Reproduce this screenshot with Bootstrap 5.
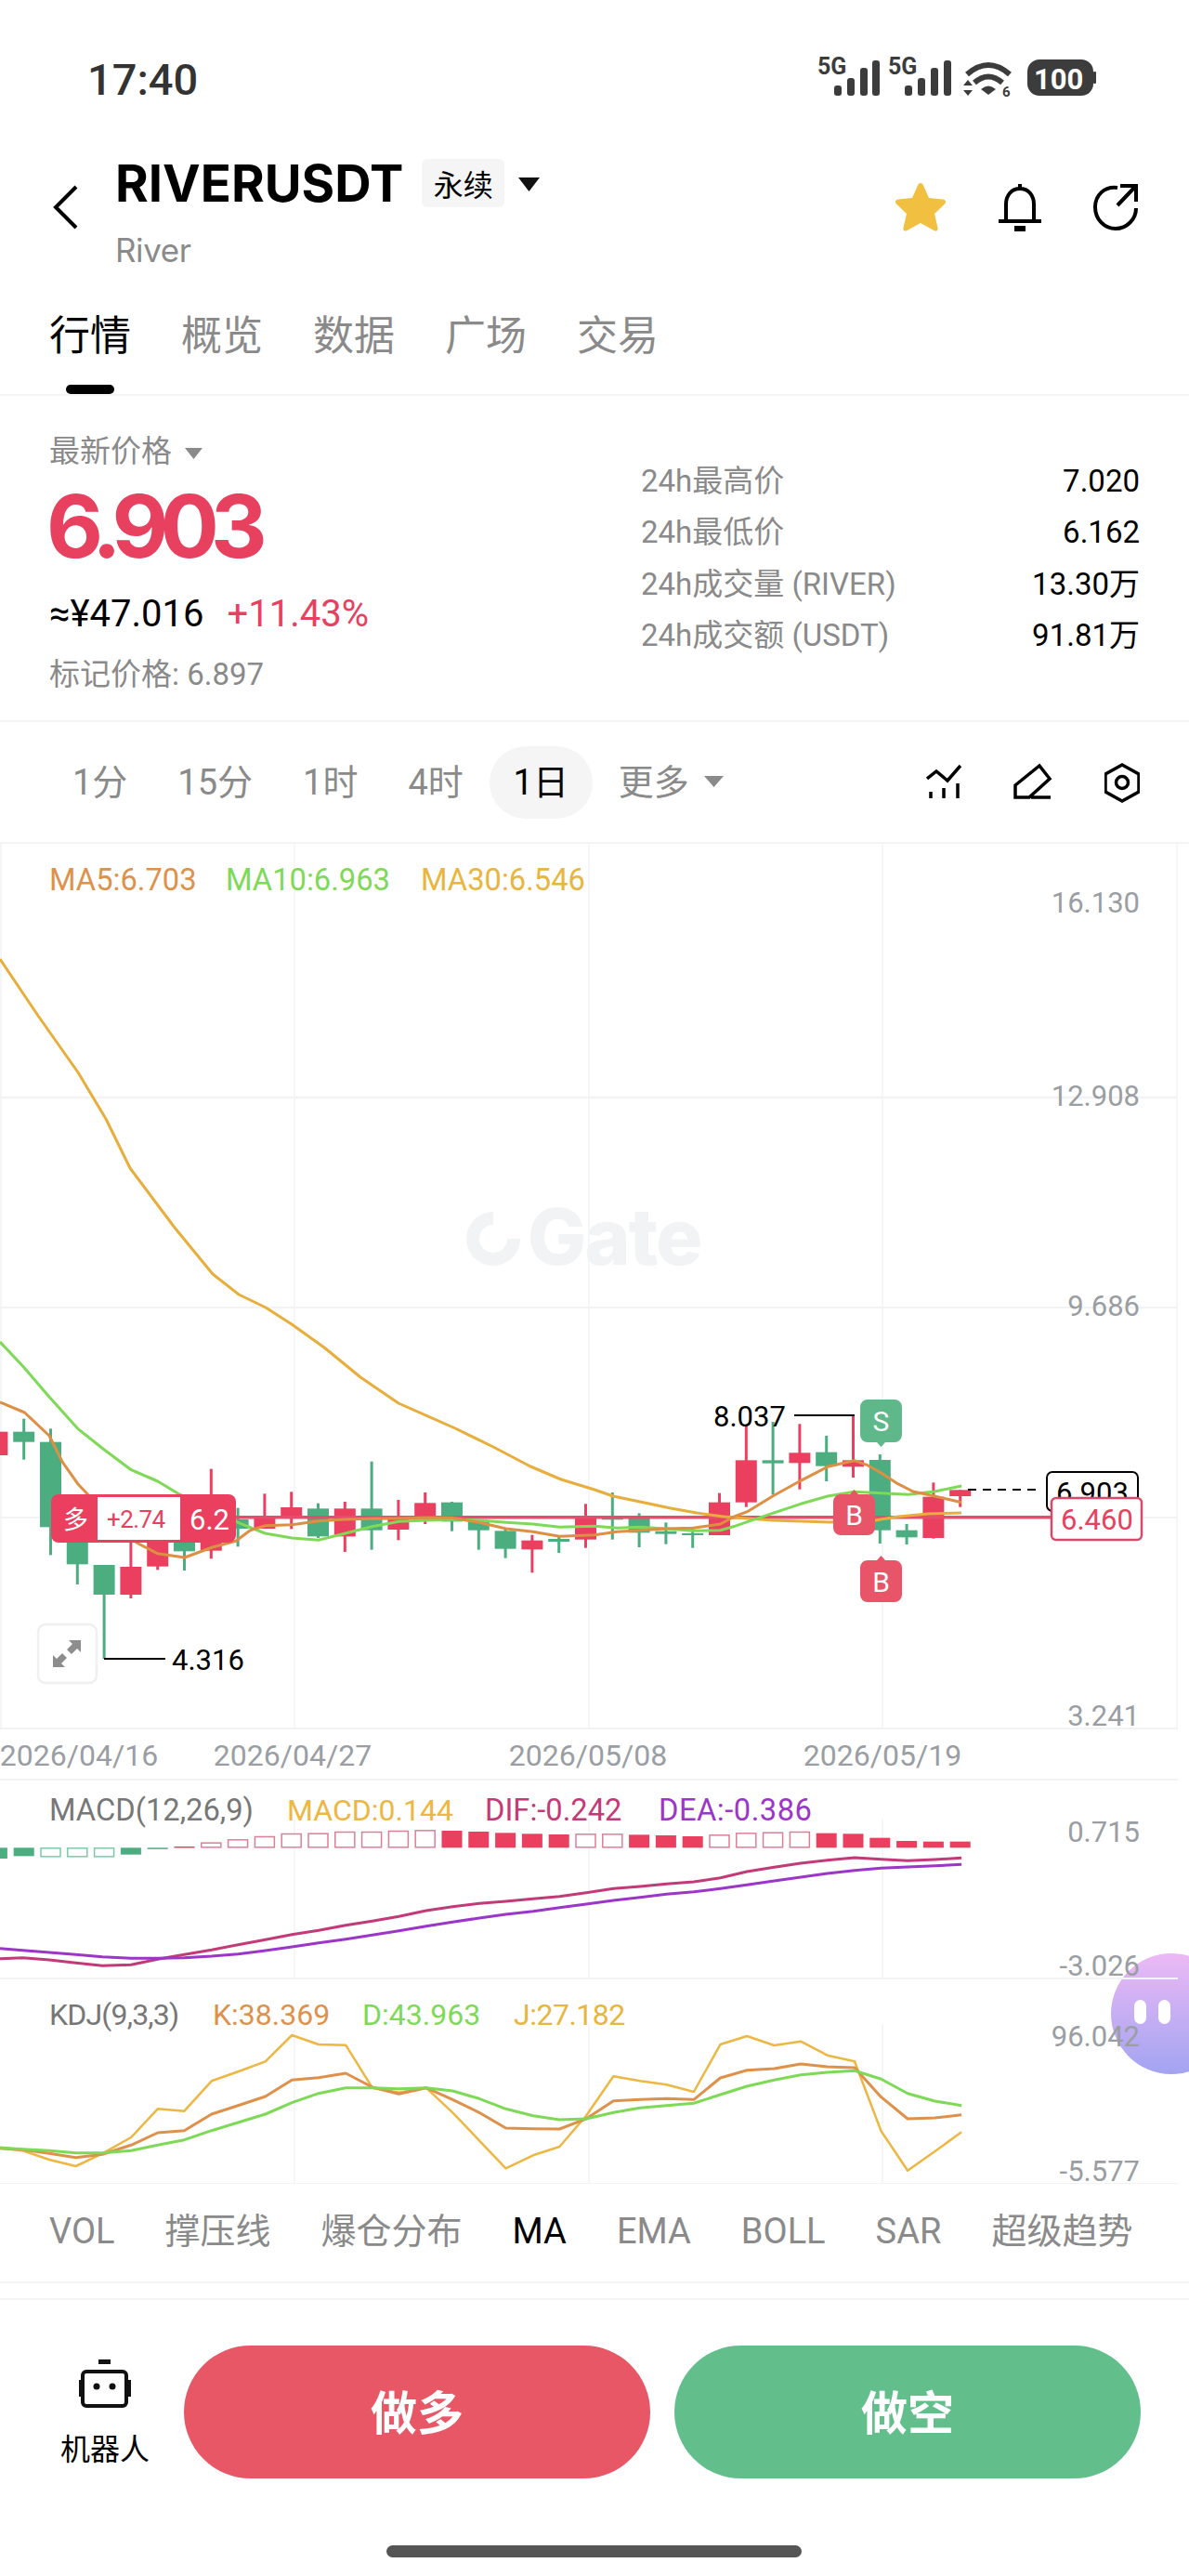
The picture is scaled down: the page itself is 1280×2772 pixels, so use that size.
<!DOCTYPE html>
<html lang="zh">
<head>
<meta charset="utf-8">
<title>RIVERUSDT</title>
<link href="https://cdn.jsdelivr.net/npm/bootstrap@5.3.0/dist/css/bootstrap.min.css" rel="stylesheet">
<style>
html,body{margin:0;background:#fff}
body{width:1280px;height:2772px;overflow:hidden;font-family:Roboto,"Noto Sans CJK SC",sans-serif;color:#000}
.app{width:1280px;height:2772px;position:relative}
.cjk{font-family:"Noto Sans CJK SC",sans-serif}
.gr{color:#8a8a8a}
.rd{color:#e8405f}
.sbar{height:160px;padding:62px 94px 0}
.clock{font-size:47px;font-weight:500;color:#333;line-height:1}
.sicons{position:absolute;left:870px;top:50px;width:320px;height:62px}
.hdr{height:160px;padding-left:57px;padding-right:54px}
.back{width:27px;height:48px;margin-top:39px;margin-right:40px;flex:none}
.sym{font-family:Inter,sans-serif;font-weight:700;font-size:54.500px;line-height:1;margin-top:10px}
.pname{font-family:Inter,sans-serif;font-size:35px;line-height:1;margin-top:27px;color:#8a8a8a;letter-spacing:-.4px}
.perp{width:89px;height:52px;background:#f5f5f5;border-radius:6px;font-size:32px;margin-left:20px;margin-top:11px}
.caret{width:23px;height:15px;margin-left:15px;margin-top:31px}
.hicons{margin-left:auto;margin-top:35px;gap:53px}
.tabs{height:106px;padding-left:53px;gap:54px;font-size:44px;border-bottom:2px solid #f4f4f4;position:relative;line-height:76px}
.tabs span{width:88px;text-align:center}
.tabbar{position:absolute;left:71px;bottom:0;width:52px;height:10px;background:#000;border-radius:5px}
.pricebox{height:351px;padding:0 53px;border-bottom:2px solid #f4f4f4}
.lab{font-size:33px;line-height:1;padding-top:43px}
.lab svg{width:19px;height:12px;margin-left:14px;vertical-align:3px}
.bigp{font-family:Inter,sans-serif;font-weight:700;font-size:94px;line-height:1;letter-spacing:-9px;margin-top:17px;margin-left:-3px;color:#e8405f}
.subp{font-size:40px;line-height:1;margin-top:28px;gap:25px}
.markp{font-size:33px;line-height:1;margin-top:28px}
.stats{width:537px;padding-top:75px;font-size:33px;line-height:1}
.stats>div{height:55.3px}
.tf{height:131px;padding:26px 53px 0 78px;border-bottom:2px solid #f4f4f4;font-size:38px;line-height:78px}
.tf>span{display:block}
.pill{width:111px;height:78px;border-radius:39px;background:#f5f5f5;text-align:center;color:#000;margin-left:28px}
.tfgap{gap:54px}
.more{margin-left:28px}
.tcaret{margin-left:16px;margin-top:32px}
.tficons{margin-left:auto;gap:56px}
.chartwrap{height:1442px;position:relative}
.chartwrap svg.ch{display:block;position:absolute;left:0;top:0}
.ch text{font-family:Roboto,"Noto Sans CJK SC",sans-serif}
.ax{font-size:31px;fill:#9a9ea3;text-anchor:end}
.leg{font-size:32.700px}
.leg2{font-size:32px}
.dt{font-size:32px;fill:#9a9ea3;text-anchor:middle}
.bk{font-size:31px;fill:#000}
.bub{position:absolute;left:1196px;top:1194px;width:130px;height:130px;border-radius:50%;background:linear-gradient(#ecb9f5,#a2a4f1)}
.eye{position:absolute;top:50px;width:13px;height:26px;border-radius:7px;background:#fff}
.inds{height:105px;padding-left:53px;gap:54px;font-size:38px;line-height:102px;color:#8a8a8a;white-space:nowrap}
.sep{height:2px;background:#f4f4f4}
.gapz{height:16px}
.act{padding:49px 53px 0 65px;gap:26px}
.bot{width:96px;margin-right:11px;font-size:32px;line-height:1;text-align:center;flex:none;white-space:nowrap}
.bot svg{display:block;margin:15px auto 26px}
.bbtn{width:502px;height:143px;border-radius:72px;color:#fff;font-size:50px;font-weight:700;line-height:138px;text-align:center;flex:none}
.bred{background:#e85766}
.bgrn{background:#62bf8c}
.home{position:absolute;left:416px;top:2739px;width:447px;height:13px;border-radius:7px;background:#555}
</style>
</head>
<body>
<div class="app">

<div class="sbar">
  <div class="clock">17:40</div>
  <svg class="sicons" viewBox="870 50 320 62">
    <g fill="#3c3c3c" font-family="Roboto,sans-serif" font-weight="700" font-size="25">
      <text x="880" y="80">5G</text><text x="956" y="80">5G</text>
      <rect x="898" y="92" width="8" height="11" rx="3"/><rect x="912" y="84" width="8" height="19" rx="3"/><rect x="926" y="73" width="8" height="30" rx="3"/><rect x="939" y="65" width="8" height="38" rx="3"/>
      <rect x="974" y="92" width="8" height="11" rx="3"/><rect x="988" y="84" width="8" height="19" rx="3"/><rect x="1002" y="73" width="8" height="30" rx="3"/><rect x="1016" y="65" width="8" height="38" rx="3"/>
      <path d="M1041 80q23-20 46 0" fill="none" stroke="#3c3c3c" stroke-width="6"/>
      <path d="M1049 89q15-13 30 0" fill="none" stroke="#3c3c3c" stroke-width="6"/>
      <path d="M1056 96q8-7 16 0l-8 6z"/>
      <path d="M1037 92l5-6 5 6zM1037 97l5 6 5-6z"/>
      <text x="1079" y="104" font-size="15">6</text>
      <rect x="1106" y="64" width="71" height="39" rx="13"/><rect x="1177" y="77" width="3" height="13" rx="1"/>
      <text x="1113" y="96" font-size="31" fill="#fff">100</text>
    </g>
  </svg>
</div>

<div class="hdr d-flex">
  <svg class="back" viewBox="0 0 27 48"><path d="M25 2 3 24l22 22" fill="none" stroke="#000" stroke-width="4"/></svg>
  <div>
    <div class="sym">RIVERUSDT</div>
    <div class="pname">River</div>
  </div>
  <div class="perp cjk d-flex align-items-center justify-content-center">永续</div>
  <svg class="caret" viewBox="0 0 23 15"><path d="M0 0h23L11.500 15z" fill="#111"/></svg>
  <div class="hicons d-flex">
    <svg width="58" height="54" viewBox="0 0 58 54"><path d="M29 2c1.500 0 2.500 1 3 2.500l6 13.500 15 1.500c3 .3 4 3 2 5L44 35l3.500 15c.6 3-1.700 4.500-4 3L29 45l-14.500 8c-2.300 1.500-4.600 0-4-3L14 35 3 24.500c-2-2-1-4.700 2-5L20 18l6-13.500c.5-1.500 1.500-2.500 3-2.500z" fill="#f2c040"/></svg>
    <svg width="50" height="54" viewBox="0 0 50 54"><path d="M25 3v6M10 42V25C10 15 16 8 25 8s15 7 15 17v17M2 43h46" fill="none" stroke="#000" stroke-width="4"/><rect x="19" y="48" width="12" height="6" fill="#000"/></svg>
    <svg width="50" height="54" viewBox="0 0 50 54"><path d="M27 7C13 5 3 15 3 28s10 23 22 23 22-10 22-22M45 7 27 26M30 5h17v17" fill="none" stroke="#000" stroke-width="4"/></svg>
  </div>
</div>

<div class="tabs d-flex cjk">
  <span>行情</span><span class="gr">概览</span><span class="gr">数据</span><span class="gr">广场</span><span class="gr">交易</span>
  <i class="tabbar"></i>
</div>

<div class="pricebox d-flex justify-content-between">
  <div>
    <div class="lab gr">最新价格<svg viewBox="0 0 19 12"><path d="M0 0h19L9.500 12z" fill="#8a8a8a"/></svg></div>
    <div class="bigp">6.903</div>
    <div class="subp d-flex"><span>≈¥47.016</span><span class="rd">+11.43%</span></div>
    <div class="markp gr">标记价格: 6.897</div>
  </div>
  <div class="stats">
    <div class="d-flex justify-content-between"><span class="gr">24h最高价</span><span>7.020</span></div>
    <div class="d-flex justify-content-between"><span class="gr">24h最低价</span><span>6.162</span></div>
    <div class="d-flex justify-content-between"><span class="gr">24h成交量 (RIVER)</span><span>13.30万</span></div>
    <div class="d-flex justify-content-between"><span class="gr">24h成交额 (USDT)</span><span>91.81万</span></div>
  </div>
</div>

<div class="tf d-flex gr">
  <div class="d-flex tfgap"><span>1分</span><span>15分</span><span>1时</span><span>4时</span></div>
  <span class="pill">1日</span>
  <span class="more">更多</span>
  <svg class="tcaret" width="21" height="12" viewBox="0 0 21 12"><path d="M0 0h21L10.500 12z" fill="#8a8a8a"/></svg>
  <div class="tficons d-flex align-items-start">
    <svg width="38" height="78" viewBox="1001 803 38 78"><path d="M1002 838l10-8 12 10 14-16M1006 859v-7M1020 859v-11M1035 859v-16" fill="none" stroke="#000" stroke-width="3.500"/></svg>
    <svg width="42" height="78" viewBox="1094 803 42 78"><path d="M1122 824l11 14-22 20h-15v-13zM1113 858h21" fill="none" stroke="#000" stroke-width="3.500"/></svg>
    <svg width="38" height="78" viewBox="1189 803 38 78"><path d="M1208 823l18 10v19l-18 10-18-10v-19z" fill="none" stroke="#000" stroke-width="3.500"/><circle cx="1208" cy="842" r="6.500" fill="none" stroke="#000" stroke-width="3.500"/></svg>
  </div>
</div>

<div class="chartwrap">
  <div class="bub"><i class="eye" style="left:25px"></i><i class="eye" style="left:51px"></i></div>
  <svg class="ch" id="ch" width="1280" height="1442" viewBox="0 908 1280 1442">
    <g id="grid"></g>
    <g fill="#f1f3f4">
      <path d="M531 1304a29 29 0 1 0 29 29h-14a15 15 0 1 1-15-15z"/>
      <text x="568" y="1361" font-size="84" font-weight="800" style="font-family:Inter,sans-serif" letter-spacing="-2">Gate</text>
    </g>
    <g id="cand"></g>
    <rect x="254" y="1631" width="880" height="3.500" fill="#e54d6c"/>
    <g id="lines" fill="none" stroke-linejoin="round"></g>

    <text class="leg" x="53" y="958" fill="#dd914a">MA5:6.703</text>
    <text class="leg" x="243" y="958" fill="#7ed957">MA10:6.963</text>
    <text class="leg" x="453" y="958" fill="#e8b53e">MA30:6.546</text>
    <text class="ax" x="1227" y="982">16.130</text>
    <text class="ax" x="1227" y="1190">12.908</text>
    <text class="ax" x="1227" y="1416">9.686</text>
    <text class="ax" x="1227" y="1857">3.241</text>
    <text class="dt" x="85" y="1900">2026/04/16</text>
    <text class="dt" x="315" y="1900">2026/04/27</text>
    <text class="dt" x="633" y="1900">2026/05/08</text>
    <text class="dt" x="950" y="1900">2026/05/19</text>

    <path d="M112 1785h66" stroke="#000" stroke-width="2" fill="none"/>
    <text class="bk" x="185" y="1797">4.316</text>
    <path d="M855 1523h65" stroke="#000" stroke-width="2" fill="none"/>
    <text class="bk" x="768" y="1535">8.037</text>

    <rect x="41" y="1748" width="63" height="63" rx="8" fill="#fff" stroke="#f0f0f0" stroke-width="2.500"/>
    <path d="M87 1765l-13 0 4 4-6 6 5 5 6-6 4 4zM57 1794l13 0-4-4 6-6-5-5-6 6-4-4z" fill="#8d8d8d"/>

    <path d="M1042 1603h80" stroke="#000" stroke-width="2" stroke-dasharray="9 7"/>
    <rect x="1127" y="1584" width="98" height="42" rx="6" fill="#fff" stroke="#000" stroke-width="2"/>
    <text class="bk" x="1137" y="1617">6.903</text>
    <rect x="1132" y="1612" width="97" height="45" rx="5" fill="#fff" stroke="#d9486a" stroke-width="2.500"/>
    <text x="1142" y="1646" font-size="31" fill="#e8405f">6.460</text>

    <path d="M926 1514a8 8 0 0 1 8-8h29a8 8 0 0 1 8 8v30a8 8 0 0 1-8 8h-10l-4.500 5-4.500-5h-10a8 8 0 0 1-8-8z" fill="#5eb88a"/>
    <text x="948.500" y="1540" font-size="30" fill="#fff" text-anchor="middle">S</text>
    <path d="M897 1616a8 8 0 0 1 8-8h10l4.500-5 4.500 5h10a8 8 0 0 1 8 8v28a8 8 0 0 1-8 8h-29a8 8 0 0 1-8-8z" fill="#e85468"/>
    <text x="919.500" y="1641" font-size="30" fill="#fff" text-anchor="middle">B</text>
    <path d="M926 1687a8 8 0 0 1 8-8h10l4.500-5 4.500 5h10a8 8 0 0 1 8 8v29a8 8 0 0 1-8 8h-29a8 8 0 0 1-8-8z" fill="#e85468"/>
    <text x="948.500" y="1713" font-size="30" fill="#fff" text-anchor="middle">B</text>

    <rect x="55" y="1608" width="199" height="52" rx="8" fill="#ea3f5e"/>
    <rect x="105" y="1611" width="89" height="46" fill="#fff"/>
    <text x="68" y="1645" font-size="27" fill="#fff">多</text>
    <text x="115" y="1644" font-size="26" fill="#e8405f" letter-spacing="-.6">+2.74</text>
    <text x="204" y="1646" font-size="31" fill="#fff">6.2</text>

    <text class="leg" x="53" y="1959" fill="#777">MACD(12,26,9)</text>
    <text class="leg2" x="309" y="1959" fill="#ecb742">MACD:0.144</text>
    <text class="leg" x="522" y="1959" fill="#c43a76">DIF:-0.242</text>
    <text class="leg" x="709" y="1959" fill="#9b36c8" letter-spacing=".5">DEA:-0.386</text>
    <text class="ax" x="1227" y="1982">0.715</text>
    <text class="ax" x="1227" y="2126">-3.026</text>

    <text class="leg2" x="53" y="2179" fill="#777" letter-spacing="-.8">KDJ(9,3,3)</text>
    <text class="leg2" x="229" y="2179" fill="#dd914a">K:38.369</text>
    <text class="leg2" x="390" y="2179" fill="#7ed957">D:43.963</text>
    <text class="leg2" x="553" y="2179" fill="#e8b53e" letter-spacing="-.5">J:27.182</text>
    <text class="ax" x="1227" y="2202">96.042</text>
    <text class="ax" x="1227" y="2347">-5.577</text>
  </svg>
</div>

<div class="inds d-flex">
  <span>VOL</span><span>撑压线</span><span>爆仓分布</span><span class="text-black">MA</span><span>EMA</span><span>BOLL</span><span>SAR</span><span>超级趋势</span>
</div>
<div class="sep"></div>
<div class="gapz"></div>
<div class="sep"></div>

<div class="act d-flex">
  <div class="bot">
    <svg width="56" height="52" viewBox="0 0 56 52"><rect x="21" y="0" width="13" height="5" fill="#111"/><rect x="4" y="13" width="47" height="37" rx="4" fill="none" stroke="#111" stroke-width="4"/><rect x="0" y="22" width="4" height="18" fill="#111"/><rect x="52" y="22" width="4" height="18" fill="#111"/><circle cx="19" cy="29" r="3.500" fill="#111"/><circle cx="36" cy="29" r="3.500" fill="#111"/></svg>
    <div class="cjk">机器人</div>
  </div>
  <div class="bbtn bred cjk">做多</div>
  <div class="bbtn bgrn cjk">做空</div>
</div>

<div class="home"></div>
</div>

<script src="https://cdn.jsdelivr.net/npm/bootstrap@5.3.0/dist/js/bootstrap.bundle.min.js"></script>
<script>
(function(){
var NS='http://www.w3.org/2000/svg';
function el(parent,name,attrs){var e=document.createElementNS(NS,name);for(var k in attrs)e.setAttribute(k,attrs[k]);parent.appendChild(e);return e;}
var grid=document.getElementById('grid'),cand=document.getElementById('cand'),lines=document.getElementById('lines');
var GC='#f2f3f4';
[1181,1407,1633,1860,1915,2129,2350].forEach(function(y){el(grid,'line',{x1:0,x2:1268,y1:y,y2:y,stroke:GC,'stroke-width':y==1181?2.5:2});});
[1,317,634,950,1267].forEach(function(x){el(grid,'line',{x1:x,x2:x,y1:908,y2:1860,stroke:GC,'stroke-width':1.5});});
[317,634,950].forEach(function(x){
  el(grid,'line',{x1:x,x2:x,y1:1958,y2:2129,stroke:GC,'stroke-width':1.5});
  el(grid,'line',{x1:x,x2:x,y1:2178,y2:2350,stroke:GC,'stroke-width':1.5});
});
var R='#ea3f5e',G='#4cae80';
function cx(i){return 25.7+28.8*i;}
function zy(v){return 1450+v/3;}
var C=[[-1,R,272,348,272,348],[0,G,272,305,230,362],[1,G,305,580,262,670],[2,G,580,700,480,765],[3,G,702,798,702,1005],[4,R,708,798,630,810],[5,R,600,707,600,718],[6,G,560,658,560,720],[7,R,520,656,392,682],[8,G,555,585,518,643],[9,R,548,585,472,585],[10,R,516,550,466,586],[11,G,520,610,503,615],[12,R,520,610,498,660],[13,G,520,590,368,653],[14,R,548,588,492,622],[15,R,502,550,468,570],[16,G,500,562,498,593],[17,G,562,590,555,653],[18,G,592,650,583,680],[19,R,623,652,605,727],[20,G,618,627,608,663],[21,R,545,620,505,647],[22,G,550,556,468,620],[23,G,552,598,535,645],[24,G,593,602,565,635],[25,G,600,606,585,647],[26,R,500,606,470,606],[27,R,364,500,250,515],[28,G,364,374,240,475],[29,R,340,373,247,458],[30,G,338,383,285,432],[31,R,364,385,220,420],[32,G,363,590,345,633],[33,G,590,613,570,636],[34,R,482,615,436,617],[35,R,460,480,460,515]];
C.forEach(function(c){var x=cx(c[0]);
  el(cand,'rect',{x:x-1.5,y:zy(c[4]),width:3,height:(c[5]-c[4])/3,fill:c[1]});
  el(cand,'rect',{x:x-11.5,y:zy(c[2]),width:23,height:(c[3]-c[2])/3,fill:c[1]});
});
var B=[[-1,'g',1,300],[0,'g',1,292],[1,'g',0,295],[2,'g',0,295],[3,'g',0,295],[4,'g',1,287],[5,'g',1,268],[6,'r',1,261],[7,'r',0,248],[8,'r',0,238],[9,'r',0,228],[10,'r',0,219],[11,'r',0,218],[12,'r',0,213],[13,'r',0,213],[14,'r',0,210],[15,'r',0,208],[16,'r',1,210],[17,'r',1,213],[18,'r',1,217],[19,'r',1,220],[20,'r',1,222],[21,'r',0,220],[22,'r',0,220],[23,'r',1,223],[24,'r',1,225],[25,'r',1,228],[26,'r',0,223],[27,'r',0,217],[28,'r',0,215],[29,'r',0,213],[30,'r',1,218],[31,'r',1,220],[32,'r',1,233],[33,'r',1,243],[34,'r',1,245],[35,'r',1,245]];
B.forEach(function(b){var x=cx(b[0]),col=b[1]=='g'?G:R,y0=1900+265/3,y1=1900+b[3]/3,t=Math.min(y0,y1),h=Math.max(Math.abs(y1-y0),1.5);
  if(b[2])el(cand,'rect',{x:x-11,y:t,width:22,height:h,fill:col});
  else el(cand,'rect',{x:x-10.5,y:t+.5,width:21,height:h-1,fill:'#fff',stroke:b[1]=='g'?'#7ccaa5':'#dc7f95','stroke-width':1.5});
});
function z3(a){return a.map(function(p){return (p[0]/2.45).toFixed(1)+','+(1450+p[1]/3).toFixed(1);});}
function z4(a){return a.map(function(p){return (640+p[0]/2.45).toFixed(1)+','+(1450+p[1]/3).toFixed(1);});}
function z5(a){return a.map(function(p){return (p[0]/1.225).toFixed(1)+','+(1900+p[1]/3).toFixed(1);});}
function line(pts,col,w){el(lines,'polyline',{points:pts.join(' '),stroke:col,'stroke-width':w});}
var ma30=['0,1032','41,1093','84,1154','114,1204','140,1257','188,1321','229,1371','257,1393','286,1407','314,1425','349,1450','388,1482','429,1510','490,1537','531,1557','571,1578','604,1592','640,1603','660,1610','689,1616','722,1623','750,1628','779,1632','791,1633','832,1636','893,1638','942,1636','967,1632','999,1629','1035,1628'];
line(ma30,'#e8ae3c',3);
var ma10=z3([[0,-18],[60,60],[130,160],[205,262],[275,330],[346,395],[416,432],[470,472],[628,565],[699,600],[770,615],[840,622],[911,600],[981,578],[1052,562],[1123,558],[1193,555],[1264,558],[1335,565],[1405,570],[1476,580]]).concat(z4([[0,577],[60,583],[120,580],[190,585],[260,592],[332,590],[370,577],[403,563],[470,535],[544,505],[615,480],[685,466],[756,470],[827,475],[897,465],[968,447]]));
line(ma10,'#7ed957',3);
var ma5=z3([[0,177],[65,210],[130,285],[165,370],[205,440],[232,475],[360,630],[415,665],[487,678],[560,645],[622,625],[660,590],[700,575],[770,572],[840,560],[910,555],[980,553],[1050,552],[1120,550],[1190,550],[1264,565],[1335,585],[1405,595],[1476,610]]).concat(z4([[0,605],[60,595],[120,590],[190,585],[260,583],[332,570],[370,545],[403,530],[470,480],[544,430],[615,385],[685,365],[720,380],[756,405],[800,440],[840,465],[897,480],[968,500]]));
line(ma5,'#dd8f43',3);
var X=[0,30,65,100,135,173,208,243,279,314,350,385,420,456,491,526,562,597,632,667,703,738,773,809,844,879,915,950,985,1021,1056,1091,1127,1162,1197,1233,1268];
function zip(ys){return z5(ys.map(function(y,i){return [X[i],y];}));}
line(zip([623,620,627,637,646,643,625,610,595,578,562,545,532,515,502,487,468,455,445,438,430,422,410,397,390,382,375,362,342,328,315,305,297,302,307,303,298]),'#c23a78',3);
line(zip([590,596,603,610,617,622,622,620,615,608,597,585,572,560,547,533,518,505,492,480,470,458,447,435,425,415,407,397,385,372,360,348,338,331,327,323,319]),'#9b36c8',3);
line(zip([1235,1243,1272,1293,1252,1200,1108,1115,1018,988,955,870,900,902,1040,1055,1040,1120,1210,1300,1258,1230,1130,1003,1018,1030,1053,900,873,903,890,935,955,1180,1307,1245,1183]),'#ecb742',2.5);
line(zip([1235,1240,1252,1265,1255,1225,1185,1178,1125,1097,1068,1015,1007,993,1038,1060,1040,1078,1120,1170,1172,1173,1140,1082,1078,1075,1078,1008,983,978,963,972,975,1070,1140,1137,1127]),'#dd914a',3);
line(zip([1233,1238,1243,1250,1250,1243,1225,1208,1178,1152,1125,1088,1058,1040,1040,1043,1040,1050,1075,1108,1130,1143,1140,1120,1105,1097,1090,1062,1035,1015,998,990,985,1012,1058,1083,1097]),'#7ed957',3);
})();
</script>
</body>
</html>
